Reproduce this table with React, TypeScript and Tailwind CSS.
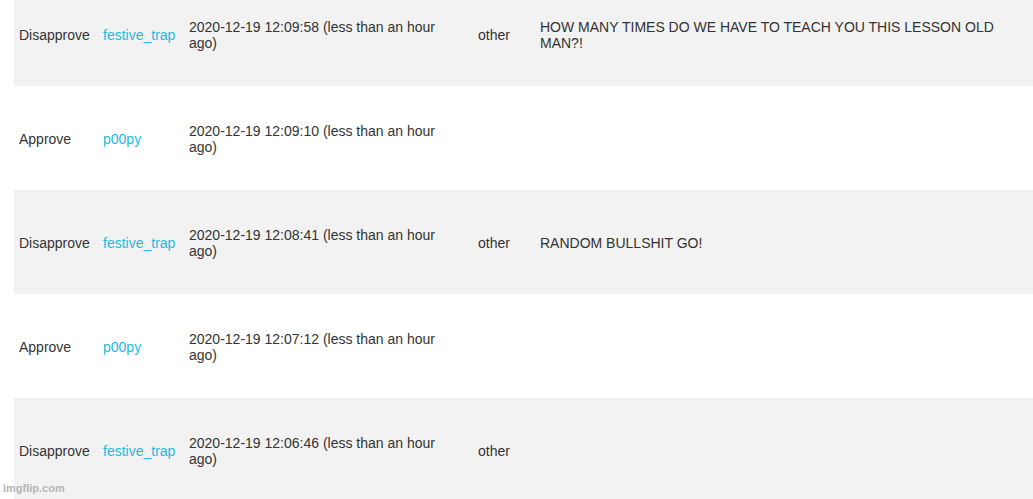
const ROWS = [
  { action: 'Disapprove', user: 'festive_trap', time: '2020-12-19 12:09:58 (less than an hour ago)', reason: 'other', comment: 'HOW MANY TIMES DO WE HAVE TO TEACH YOU THIS LESSON OLD MAN?!' },
  { action: 'Approve', user: 'p00py', time: '2020-12-19 12:09:10 (less than an hour ago)', reason: '', comment: '' },
  { action: 'Disapprove', user: 'festive_trap', time: '2020-12-19 12:08:41 (less than an hour ago)', reason: 'other', comment: 'RANDOM BULLSHIT GO!' },
  { action: 'Approve', user: 'p00py', time: '2020-12-19 12:07:12 (less than an hour ago)', reason: '', comment: '' },
  { action: 'Disapprove', user: 'festive_trap', time: '2020-12-19 12:06:46 (less than an hour ago)', reason: 'other', comment: '' },
];

export default function App() {
  return (
    <div
      className="relative h-[499px] w-[1033px] overflow-hidden bg-white text-[14px] leading-4 text-[#333]"
      style={{ fontFamily: '"Liberation Sans", Arial, sans-serif' }}
    >
      <div className="-mt-[18px] ml-[14px]">
        {ROWS.map((r, i) => (
          <div
            key={i}
            className={`grid h-[104px] grid-cols-[84px_86px_289px_62px_1fr] items-center pt-[2px] ${i % 2 === 0 ? 'bg-[#f2f2f2]' : 'bg-white'}`}
          >
            <div className="px-[5px]">{r.action}</div>
            <div className="px-[5px] text-[#1cb9e8]">{r.user}</div>
            <div className="pl-[5px] pr-[38px]">{r.time}</div>
            <div className="px-[5px]">{r.reason}</div>
            <div className="pl-[5px] pr-[20px]">{r.comment}</div>
          </div>
        ))}
      </div>
      <div className="absolute bottom-[3px] left-[3px] text-[11px] font-bold text-[#b5b5b5]">imgflip.com</div>
    </div>
  );
}
